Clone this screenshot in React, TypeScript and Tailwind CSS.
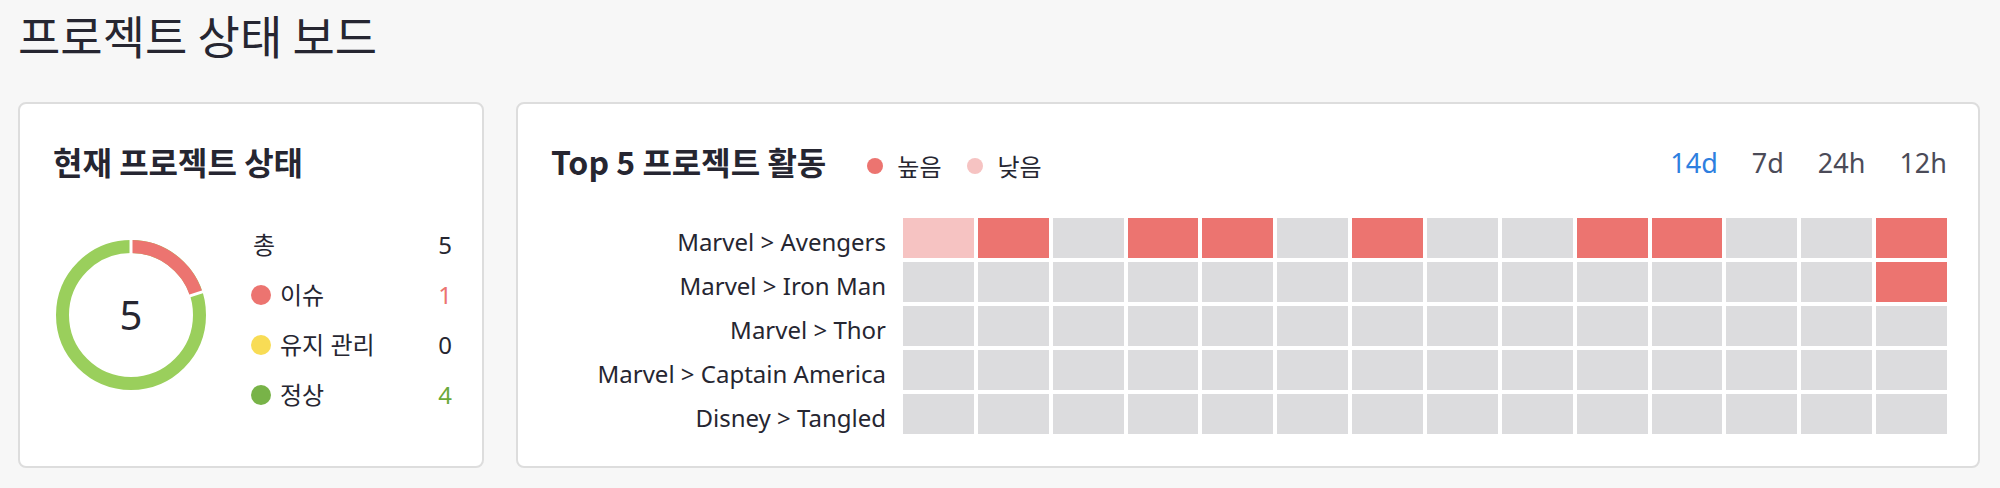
import React from "react";

type Level = 0 | 1 | 2;

interface ProjectRow {
  name: string;
  cells: Level[];
}

const rows: ProjectRow[] = [
  { name: "Marvel > Avengers", cells: [1, 2, 0, 2, 2, 0, 2, 0, 0, 2, 2, 0, 0, 2] },
  { name: "Marvel > Iron Man", cells: [0, 0, 0, 0, 0, 0, 0, 0, 0, 0, 0, 0, 0, 2] },
  { name: "Marvel > Thor", cells: [0, 0, 0, 0, 0, 0, 0, 0, 0, 0, 0, 0, 0, 0] },
  { name: "Marvel > Captain America", cells: [0, 0, 0, 0, 0, 0, 0, 0, 0, 0, 0, 0, 0, 0] },
  { name: "Disney > Tangled", cells: [0, 0, 0, 0, 0, 0, 0, 0, 0, 0, 0, 0, 0, 0] },
];

const cellColor: Record<Level, string> = {
  0: "bg-[#dcdcde]",
  1: "bg-[#f6c3c2]",
  2: "bg-[#ec7470]",
};

const statusItems = [
  { label: "이슈", value: 1, dot: "bg-[#ec7470]", num: "text-[#ec7470]" },
  { label: "유지 관리", value: 0, dot: "bg-[#f8dc55]", num: "text-[#262631]" },
  { label: "정상", value: 4, dot: "bg-[#78b348]", num: "text-[#6aaa3a]" },
];

const ranges = ["14d", "7d", "24h", "12h"];

const Donut: React.FC = () => {
  const r = 68.5;
  const c = 2 * Math.PI * r;
  const red = c / 5;
  // white separators at 0 and 72 degrees (clockwise from top)
  const sep = (deg: number) => {
    const a = ((deg - 90) * Math.PI) / 180;
    return {
      x1: 75 + 58 * Math.cos(a),
      y1: 75 + 58 * Math.sin(a),
      x2: 75 + 79 * Math.cos(a),
      y2: 75 + 79 * Math.sin(a),
    };
  };
  return (
    <div className="relative w-[150px] h-[150px] shrink-0">
      <svg width="150" height="150" viewBox="0 0 150 150">
        <circle cx="75" cy="75" r={r} fill="none" stroke="#9acf5c" strokeWidth="13" />
        <circle
          cx="75"
          cy="75"
          r={r}
          fill="none"
          stroke="#ec7470"
          strokeWidth="13"
          strokeDasharray={`${red} ${c - red}`}
          transform="rotate(-90 75 75)"
        />
        <line {...sep(0)} stroke="#ffffff" strokeWidth="3" />
        <line {...sep(72)} stroke="#ffffff" strokeWidth="3" />
      </svg>
      <div className="absolute inset-0 flex items-center justify-center text-[40px] leading-none text-[#262631]">
        5
      </div>
    </div>
  );
};

export default function App() {
  return (
    <div className="w-full h-[488px] bg-[#f7f7f7] pl-[18px] pr-[20px] pt-[7px] font-['Noto_Sans','Noto_Sans_CJK_KR',sans-serif] text-[#262631]">
      <h1 className="text-[46px] leading-[1.2] font-['Noto_Sans_CJK_KR',sans-serif] font-normal mb-[40px]">
        프로젝트 상태 보드
      </h1>

      <div className="flex gap-[32px]">
        {/* current status */}
        <div className="w-[466px] h-[366px] shrink-0 bg-white border-2 border-[#dddddd] rounded-[8px] px-[33px] pt-[38px]">
          <h2 className="text-[32px] leading-[1.2] font-bold font-['Noto_Sans_CJK_KR',sans-serif]">
            현재 프로젝트 상태
          </h2>
          <div className="flex items-start mt-[39px]">
            <div className="mt-[20px] ml-[3px]">
              <Donut />
            </div>
            <div className="flex-1 ml-[45px] mr-[-3px] text-[24px]">
              <div className="h-[50px] flex items-center justify-between pl-[2px]">
                <span>총</span>
                <span>5</span>
              </div>
              {statusItems.map((s) => (
                <div key={s.label} className="h-[50px] flex items-center">
                  <span className={`w-[20px] h-[20px] rounded-full ${s.dot}`} />
                  <span className="ml-[9px]">{s.label}</span>
                  <span className={`ml-auto ${s.num}`}>{s.value}</span>
                </div>
              ))}
            </div>
          </div>
        </div>

        {/* activity */}
        <div className="flex-1 h-[366px] bg-white border-2 border-[#dddddd] rounded-[8px] pl-[33px] pr-[31px] pt-[38px]">
          <div className="flex items-center h-[38px]">
            <h2 className="text-[32px] leading-[1.2] font-bold font-['Noto_Sans_CJK_KR',sans-serif]">
              Top 5 프로젝트 활동
            </h2>
            <div className="flex items-center ml-[41px] mt-[10px] text-[24px] font-['Noto_Sans_CJK_KR',sans-serif]">
              <span className="w-[16px] h-[16px] rounded-full bg-[#ec7470]" />
              <span className="ml-[14px]">높음</span>
              <span className="w-[16px] h-[16px] rounded-full bg-[#f6c3c2] ml-[26px]" />
              <span className="ml-[14px]">낮음</span>
            </div>
            <div className="ml-auto flex items-center gap-[34px] text-[27px] mt-[5px]">
              {ranges.map((r, i) => (
                <span key={r} className={i === 0 ? "text-[#2e7fdf]" : "text-[#4b4b58]"}>
                  {r}
                </span>
              ))}
            </div>
          </div>

          <div className="mt-[38px] grid grid-cols-[348px_repeat(14,minmax(0,1fr))] gap-[4px]">
            {rows.map((row) => (
              <React.Fragment key={row.name}>
                <div className="h-[40px] flex items-center justify-end pr-[13px] pt-[8px] text-[24px] whitespace-nowrap">
                  {row.name}
                </div>
                {row.cells.map((c, i) => (
                  <div key={i} className={`h-[40px] ${cellColor[c]}`} />
                ))}
              </React.Fragment>
            ))}
          </div>
        </div>
      </div>
    </div>
  );
}
